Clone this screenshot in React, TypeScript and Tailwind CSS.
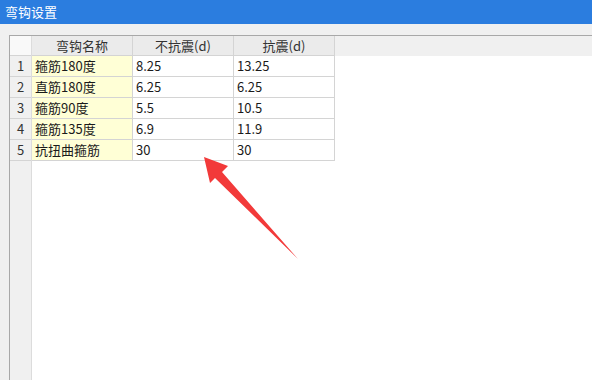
import React from "react";

const rows = [
  ["箍筋180度", "8.25", "13.25"],
  ["直筋180度", "6.25", "6.25"],
  ["箍筋90度", "5.5", "10.5"],
  ["箍筋135度", "6.9", "11.9"],
  ["抗扭曲箍筋", "30", "30"],
];

export default function App() {
  return (
    <div
      className="relative w-[592px] h-[380px] flex flex-col bg-[#f0f0f0] overflow-hidden text-[13px] text-[#1a1a1a]"
      style={{ fontFamily: '"Noto Sans CJK SC", "Liberation Sans", sans-serif' }}
    >
      <div className="h-[24px] shrink-0 bg-[#2b7ddf] text-white flex items-center pl-[5px] text-[13px]">
        弯钩设置
      </div>
      <div className="flex-1 flex pl-[9px] pt-[11px]">
        <div className="flex-1 flex border-l border-t border-[#a8a8a8]">
          <div className="w-[22px] shrink-0 flex flex-col bg-[#f0f0f0] border-r border-[#dcdcdc]">
            <div className="h-[20px] bg-[#f9f9f9] border-b border-[#d4d4d4]" />
            {rows.map((_, i) => (
              <div
                key={i}
                className="h-[21px] flex items-center justify-center border-b border-[#d4d4d4] text-[#333]"
              >
                {i + 1}
              </div>
            ))}
          </div>
          <div className="flex-1 flex flex-col bg-white">
            <div className="h-[20px] flex bg-[#f0f0f0]">
              <div className="w-[101px] flex items-center justify-center bg-[#ebebeb] border-r border-b border-[#d4d4d4] text-[#333]">
                弯钩名称
              </div>
              <div className="w-[101px] flex items-center justify-center bg-[#ebebeb] border-r border-b border-[#d4d4d4] text-[#333]">
                不抗震(d)
              </div>
              <div className="w-[101px] flex items-center justify-center bg-[#ebebeb] border-r border-b border-[#d4d4d4] text-[#333]">
                抗震(d)
              </div>
              <div className="flex-1" />
            </div>
            {rows.map((r, i) => (
              <div key={i} className="h-[21px] flex">
                <div className="w-[101px] flex items-center pl-[3px] bg-[#ffffd6] border-r border-b border-[#d4d4d4]">
                  {r[0]}
                </div>
                <div className="w-[101px] flex items-center pl-[3px] border-r border-b border-[#d4d4d4]">
                  {r[1]}
                </div>
                <div className="w-[101px] flex items-center pl-[3px] border-r border-b border-[#d4d4d4]">
                  {r[2]}
                </div>
              </div>
            ))}
          </div>
        </div>
      </div>
      <svg
        className="absolute left-0 top-0 pointer-events-none"
        width="592"
        height="380"
        viewBox="0 0 592 380"
      >
        <polygon
          points="204,157 228,166 222,172 298,259 215,178 210,183"
          fill="#f23a3a"
        />
      </svg>
    </div>
  );
}
